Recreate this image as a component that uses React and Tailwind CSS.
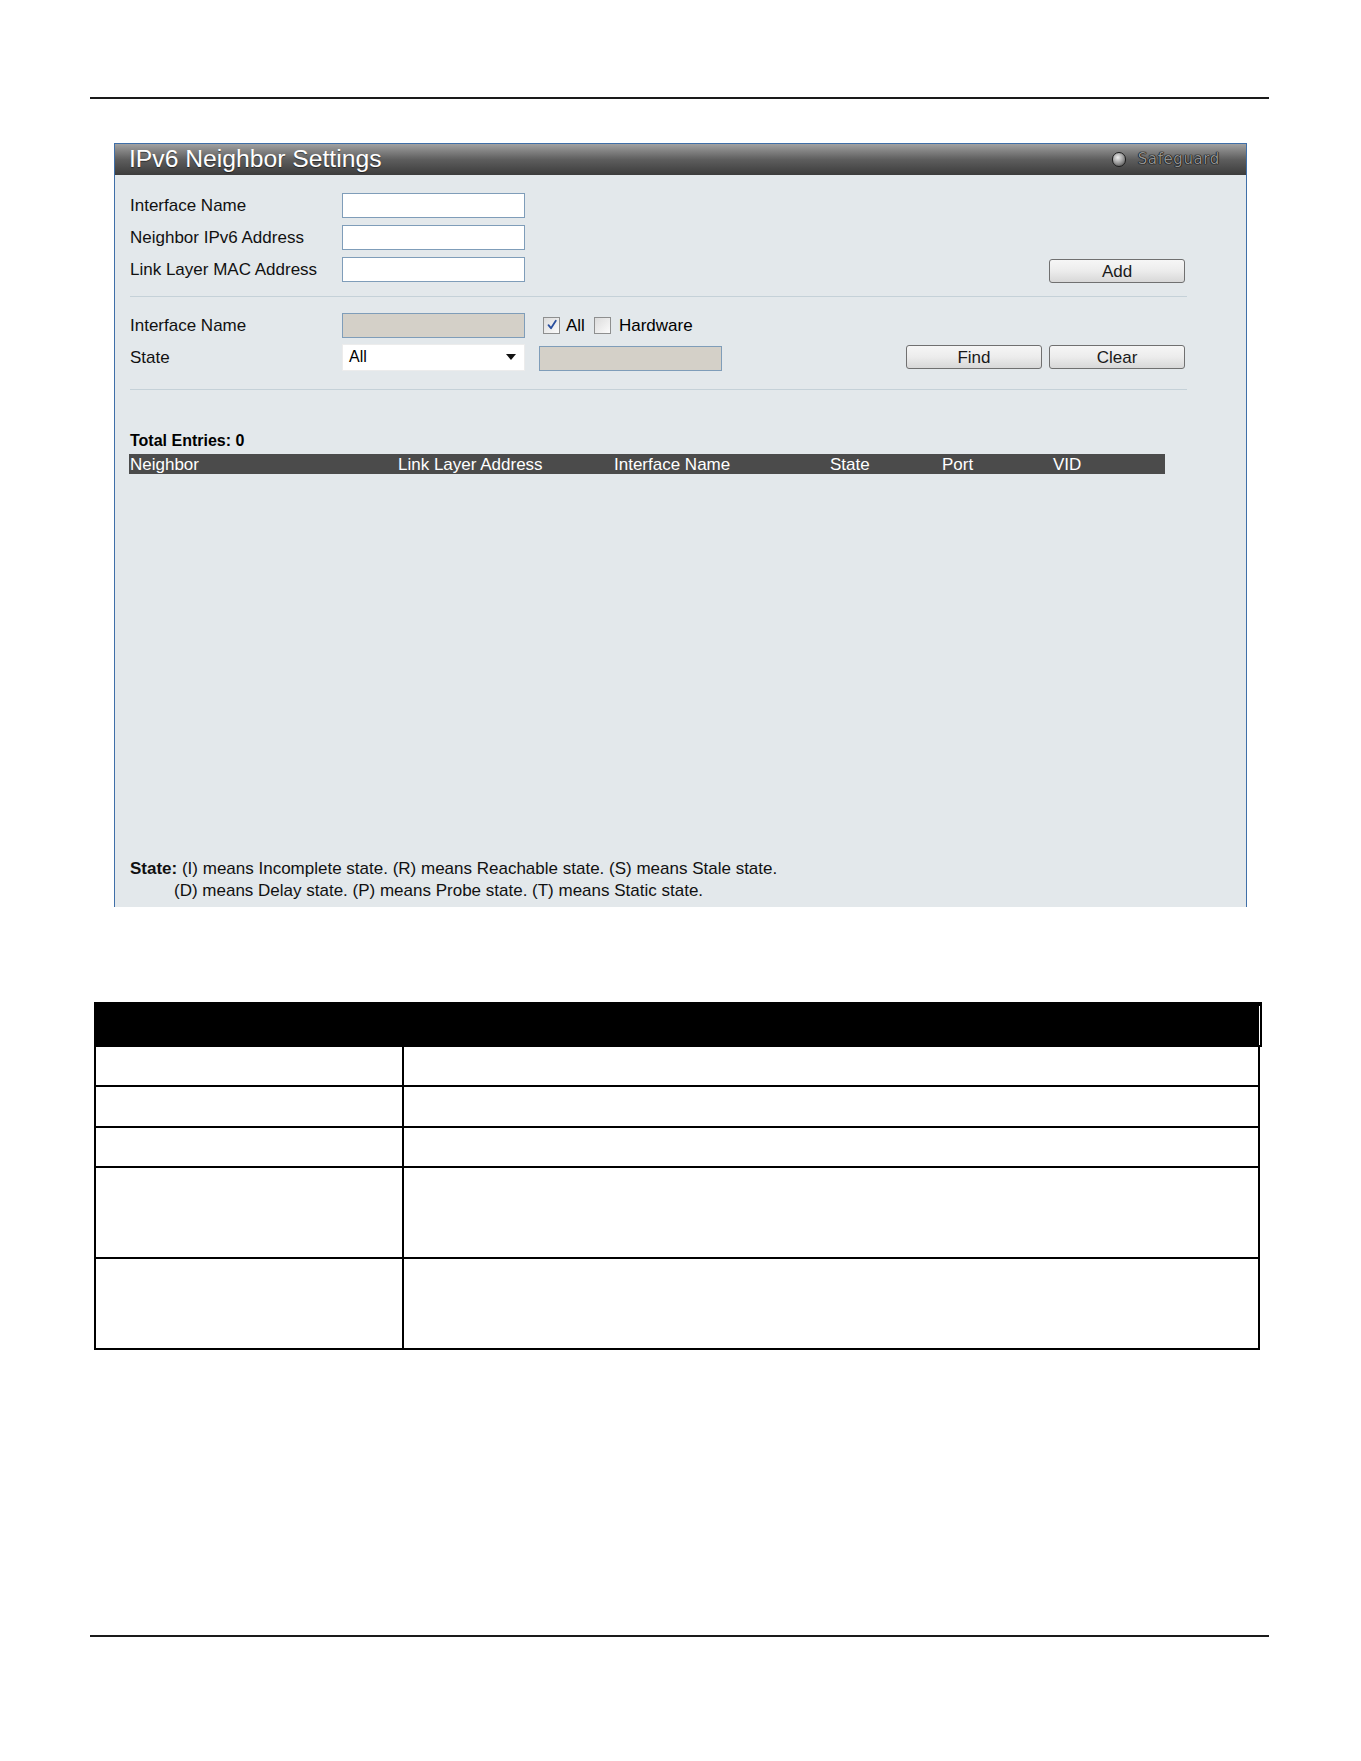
import { useState } from 'react';

const labelCls = 'w-[212px] shrink-0 text-[17px] leading-none text-[#111]';

function TextInput({ disabled = false, className = '' }) {
  return (
    <input
      type="text"
      disabled={disabled}
      className={`h-[25px] w-[183px] border outline-none ${
        disabled ? 'bg-[#d4d0c8] border-[#7f9db9]' : 'bg-white border-[#7f9db9]'
      } ${className}`}
    />
  );
}

function Button({ children, className = '' }) {
  return (
    <button
      type="button"
      className={`h-[24px] w-[136px] rounded-[3px] border border-[#707070] bg-linear-to-b from-[#f6f6f6] via-[#ececec] to-[#d8d8d8] text-[17px] leading-none text-[#1a1a1a] ${className}`}
    >
      {children}
    </button>
  );
}

function Checkbox({ checked, onChange }) {
  return (
    <button
      type="button"
      onClick={() => onChange(!checked)}
      className="flex h-[17px] w-[17px] items-center justify-center border border-[#8e8f8f] bg-linear-to-br from-[#dcdcdc] to-[#fbfbfb]"
    >
      {checked && (
        <svg viewBox="0 0 12 12" className="h-[12px] w-[12px]">
          <path d="M2.5 6.2 L5 9.2 L9.8 1.8" fill="none" stroke="#2a4f9e" strokeWidth="1.8" strokeLinecap="round" strokeLinejoin="round" />
        </svg>
      )}
    </button>
  );
}

function Row({ label, children, className = '' }) {
  return (
    <div className={`flex h-[32px] items-center ${className}`}>
      <span className={labelCls}>{label}</span>
      {children}
    </div>
  );
}

const columns = [
  { name: 'Neighbor', w: 'w-[268px]' },
  { name: 'Link Layer Address', w: 'w-[216px]' },
  { name: 'Interface Name', w: 'w-[216px]' },
  { name: 'State', w: 'w-[112px]' },
  { name: 'Port', w: 'w-[111px]' },
  { name: 'VID', w: 'flex-1' },
];

function NeighborPanel() {
  const [all, setAll] = useState(true);
  const [hardware, setHardware] = useState(false);

  return (
    <div className="ml-[24px] mt-[44px] flex h-[764px] w-[1133px] flex-col border-x border-t border-[#3f6fa8] bg-[#e3e8eb]">
      {/* title bar */}
      <div className="flex h-[31px] shrink-0 items-center justify-between bg-linear-to-b from-[#a2a2a2] via-[#5e5e5e] to-[#3c3c3c] pl-[14px] pr-[26px]">
        <span className="text-[24.7px] leading-none text-white [text-shadow:0_1px_1px_rgba(0,0,0,0.5)]">
          IPv6 Neighbor Settings
        </span>
        <div className="flex items-center gap-[12px]">
          <span className="h-[15px] w-[14px] rounded-full border border-[#1e1e1e] bg-[radial-gradient(circle_at_40%_35%,#eeeeee,#9a9a9a_50%,#3a3a3a)]" />
          <span className="font-['DejaVu_Sans',sans-serif] text-[15px] leading-none tracking-[0.6px] text-[#909090] [text-shadow:0_0_1px_#000,0_0_1px_#000,0_0_1px_#000]">
            Safeguard
          </span>
        </div>
      </div>

      <div className="flex flex-1 flex-col pl-[15px] pt-[14px] pb-[6px]">
        <div className="w-[1057px]">
          <Row label="Interface Name">
            <TextInput />
          </Row>
          <Row label="Neighbor IPv6 Address">
            <TextInput />
          </Row>
          <Row label="Link Layer MAC Address">
            <TextInput />
            <Button className="ml-auto mr-[2px] mt-[4px]">Add</Button>
          </Row>

          <div className="mt-[11px] h-px bg-[#c5d1d8]" />

          <Row label="Interface Name" className="mt-[12px]">
            <TextInput disabled />
            <div className="ml-[18px] flex items-center gap-[6px]">
              <Checkbox checked={all} onChange={setAll} />
              <span className="text-[17px] leading-none">All</span>
            </div>
            <div className="ml-[9px] flex items-center gap-[8px]">
              <Checkbox checked={hardware} onChange={setHardware} />
              <span className="text-[17px] leading-none">Hardware</span>
            </div>
          </Row>
          <Row label="State">
            <div className="flex h-[27px] w-[183px] items-center justify-between border border-[#ececec] bg-white pl-[6px] pr-[8px]">
              <span className="text-[16px] leading-none">All</span>
              <svg viewBox="0 0 10 6" className="h-[6px] w-[10px]">
                <path d="M0 0 H10 L5 6 Z" fill="#111" />
              </svg>
            </div>
            <TextInput disabled className="ml-[14px] mt-[2px]" />
            <div className="ml-auto mr-[2px] flex gap-[7px]">
              <Button>Find</Button>
              <Button className="w-[135px]">Clear</Button>
            </div>
          </Row>

          <div className="mt-[16px] h-px bg-[#c5d1d8]" />
        </div>

        <div className="mt-[41px] text-[16px] font-bold leading-[20px]">Total Entries: 0</div>
        <div className="-ml-px mt-[3px] flex h-[20px] w-[1036px] items-center bg-[#4b4b4b] text-[17px] leading-none text-white">
          {columns.map((c) => (
            <span key={c.name} className={`${c.w} pl-px`}>
              {c.name}
            </span>
          ))}
        </div>

        <div className="mt-auto text-[17px] leading-[21.5px] text-[#111]">
          <p>
            <b>State:</b> (I) means Incomplete state. (R) means Reachable state. (S) means Stale state.
          </p>
          <p className="pl-[44px]">(D) means Delay state. (P) means Probe state. (T) means Static state.</p>
        </div>
      </div>
    </div>
  );
}

const rowHeights = ['h-[40px]', 'h-[41px]', 'h-[40px]', 'h-[91px]', 'h-[91px]'];

function ParamTable() {
  return (
    <div className="ml-[4px] mt-[95px] w-[1168px]">
      <div className="relative h-[45px] bg-black">
        <div className="absolute bottom-[2px] right-[2px] top-[4px] w-px bg-white" />
      </div>
      <div className="mr-[2px] border-x-2 border-black">
        {rowHeights.map((h, i) => (
          <div key={i} className={`flex ${h} border-b-2 border-black`}>
            <div className="w-[308px] border-r-2 border-black" />
            <div className="flex-1" />
          </div>
        ))}
      </div>
    </div>
  );
}

export default function App() {
  return (
    <div className="h-[1761px] w-[1361px] bg-white font-['Liberation_Sans',Arial,sans-serif] text-black">
      <div className="w-[1269px] pl-[90px] pt-[97px]">
        <div className="h-[2px] bg-[#1a1a1a]" />
        <NeighborPanel />
        <ParamTable />
        <div className="mt-[285px] h-[2px] bg-[#1a1a1a]" />
      </div>
    </div>
  );
}
